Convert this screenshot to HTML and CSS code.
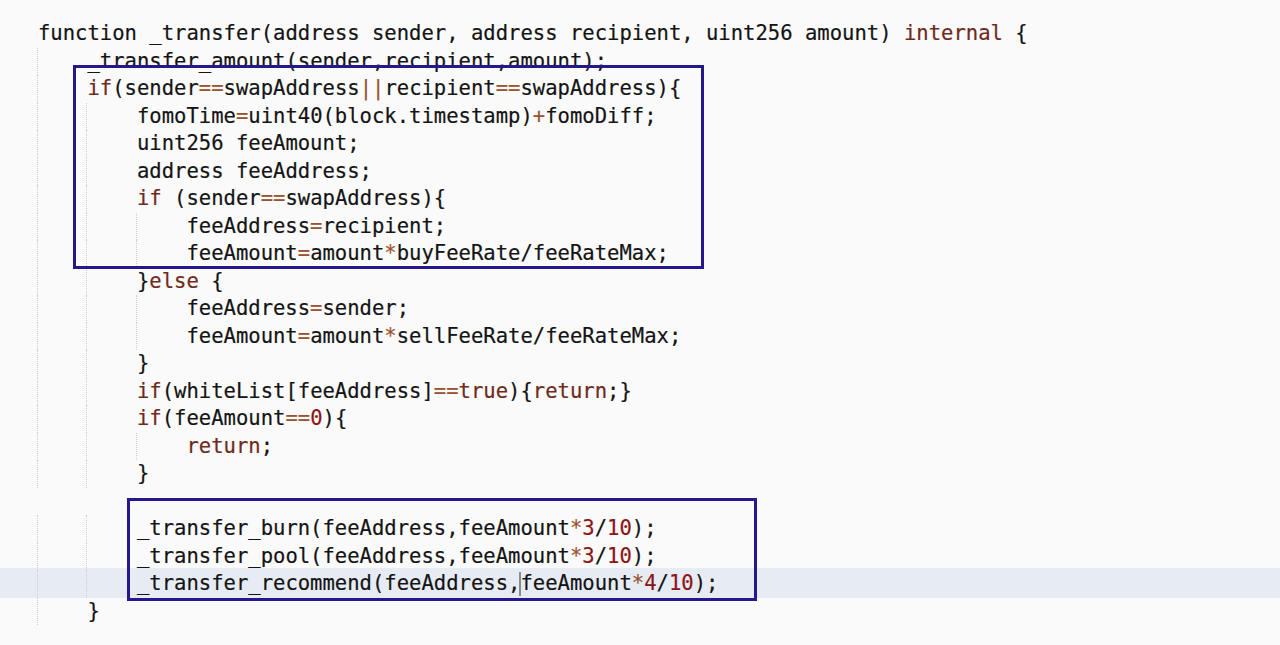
FILE: index.html
```html
<!DOCTYPE html>
<html>
<head>
<meta charset="utf-8">
<link rel="stylesheet" href="styles.css">
</head>
<body>
<div class="editor">
<div class="ln">function _transfer(address sender, address recipient, uint256 amount) <span class="k">internal</span> {</div>
<div class="ln"><span class="g"></span>_transfer_amount(sender,recipient,amount);</div>
<div class="ln"><span class="g"></span><span class="k">if</span>(sender<span class="o">==</span>swapAddress<span class="o">||</span>recipient<span class="o">==</span>swapAddress){</div>
<div class="ln"><span class="g"></span><span class="g"></span>fomoTime<span class="o">=</span>uint40(block.timestamp)<span class="o">+</span>fomoDiff;</div>
<div class="ln"><span class="g"></span><span class="g"></span>uint256 feeAmount;</div>
<div class="ln"><span class="g"></span><span class="g"></span>address feeAddress;</div>
<div class="ln"><span class="g"></span><span class="g"></span><span class="k">if</span> (sender<span class="o">==</span>swapAddress){</div>
<div class="ln"><span class="g"></span><span class="g"></span><span class="g"></span>feeAddress<span class="o">=</span>recipient;</div>
<div class="ln"><span class="g"></span><span class="g"></span><span class="g"></span>feeAmount<span class="o">=</span>amount<span class="o">*</span>buyFeeRate/feeRateMax;</div>
<div class="ln"><span class="g"></span><span class="g"></span>}<span class="k">else</span> {</div>
<div class="ln"><span class="g"></span><span class="g"></span><span class="g"></span>feeAddress<span class="o">=</span>sender;</div>
<div class="ln"><span class="g"></span><span class="g"></span><span class="g"></span>feeAmount<span class="o">=</span>amount<span class="o">*</span>sellFeeRate/feeRateMax;</div>
<div class="ln"><span class="g"></span><span class="g"></span>}</div>
<div class="ln"><span class="g"></span><span class="g"></span><span class="k">if</span>(whiteList[feeAddress]<span class="o">==</span><span class="k">true</span>){<span class="k">return</span>;}</div>
<div class="ln"><span class="g"></span><span class="g"></span><span class="k">if</span>(feeAmount<span class="o">==</span><span class="n">0</span>){</div>
<div class="ln"><span class="g"></span><span class="g"></span><span class="g"></span><span class="k">return</span>;</div>
<div class="ln"><span class="g"></span><span class="g"></span>}</div>
<div class="ln"></div>
<div class="ln"><span class="g"></span><span class="g"></span>_transfer_burn(feeAddress,feeAmount<span class="o">*</span><span class="n">3</span>/<span class="n">10</span>);</div>
<div class="ln"><span class="g"></span><span class="g"></span>_transfer_pool(feeAddress,feeAmount<span class="o">*</span><span class="n">3</span>/<span class="n">10</span>);</div>
<div class="ln cur"><span class="g"></span><span class="g"></span>_transfer_recommend(feeAddress,<span class="caret"></span>feeAmount<span class="o">*</span><span class="n">4</span>/<span class="n">10</span>);</div>
<div class="ln"><span class="g"></span>}</div>
<div class="box box1"></div>
<div class="box box2"></div>
</div>
</body>
</html>
```
FILE: styles.css
```css
html, body {
  margin: 0;
  padding: 0;
  background: #fafafa;
}
.editor {
  position: relative;
  width: 1280px;
  height: 645px;
  overflow: hidden;
  padding-top: 20px;
  box-sizing: border-box;
  font-family: "DejaVu Sans Mono", monospace;
  font-size: 20.56px;
  color: #141414;
  -webkit-text-stroke: 0.2px currentColor;
}
.ln {
  height: 27.5px;
  line-height: 27.5px;
  padding-left: 38px;
  white-space: pre;
}
.ln.cur {
  background: #e7ecf4;
  box-shadow: 0 -2px 0 #e7ecf4;
}
.g {
  display: inline-block;
  width: 4ch;
  height: 27.5px;
  vertical-align: top;
  box-sizing: border-box;
  margin-left: -1px;
  margin-right: 1px;
  border-left: 1px dotted #cfcfcf;
  -webkit-text-stroke: 0;
}
.k { color: #6f2a1b; }
.o { color: #9a5230; }
.n { color: #8c1515; }
.caret {
  display: inline-block;
  width: 0;
  height: 24px;
  vertical-align: middle;
  border-left: 2px solid #8a8a8a;
  margin-left: -1px;
  margin-right: -1px;
}
.box {
  position: absolute;
  box-sizing: border-box;
  border: 3px solid #24188c;
}
.box1 {
  left: 73px;
  top: 65px;
  width: 631px;
  height: 204px;
}
.box2 {
  left: 127px;
  top: 498px;
  width: 630px;
  height: 103px;
}
```
